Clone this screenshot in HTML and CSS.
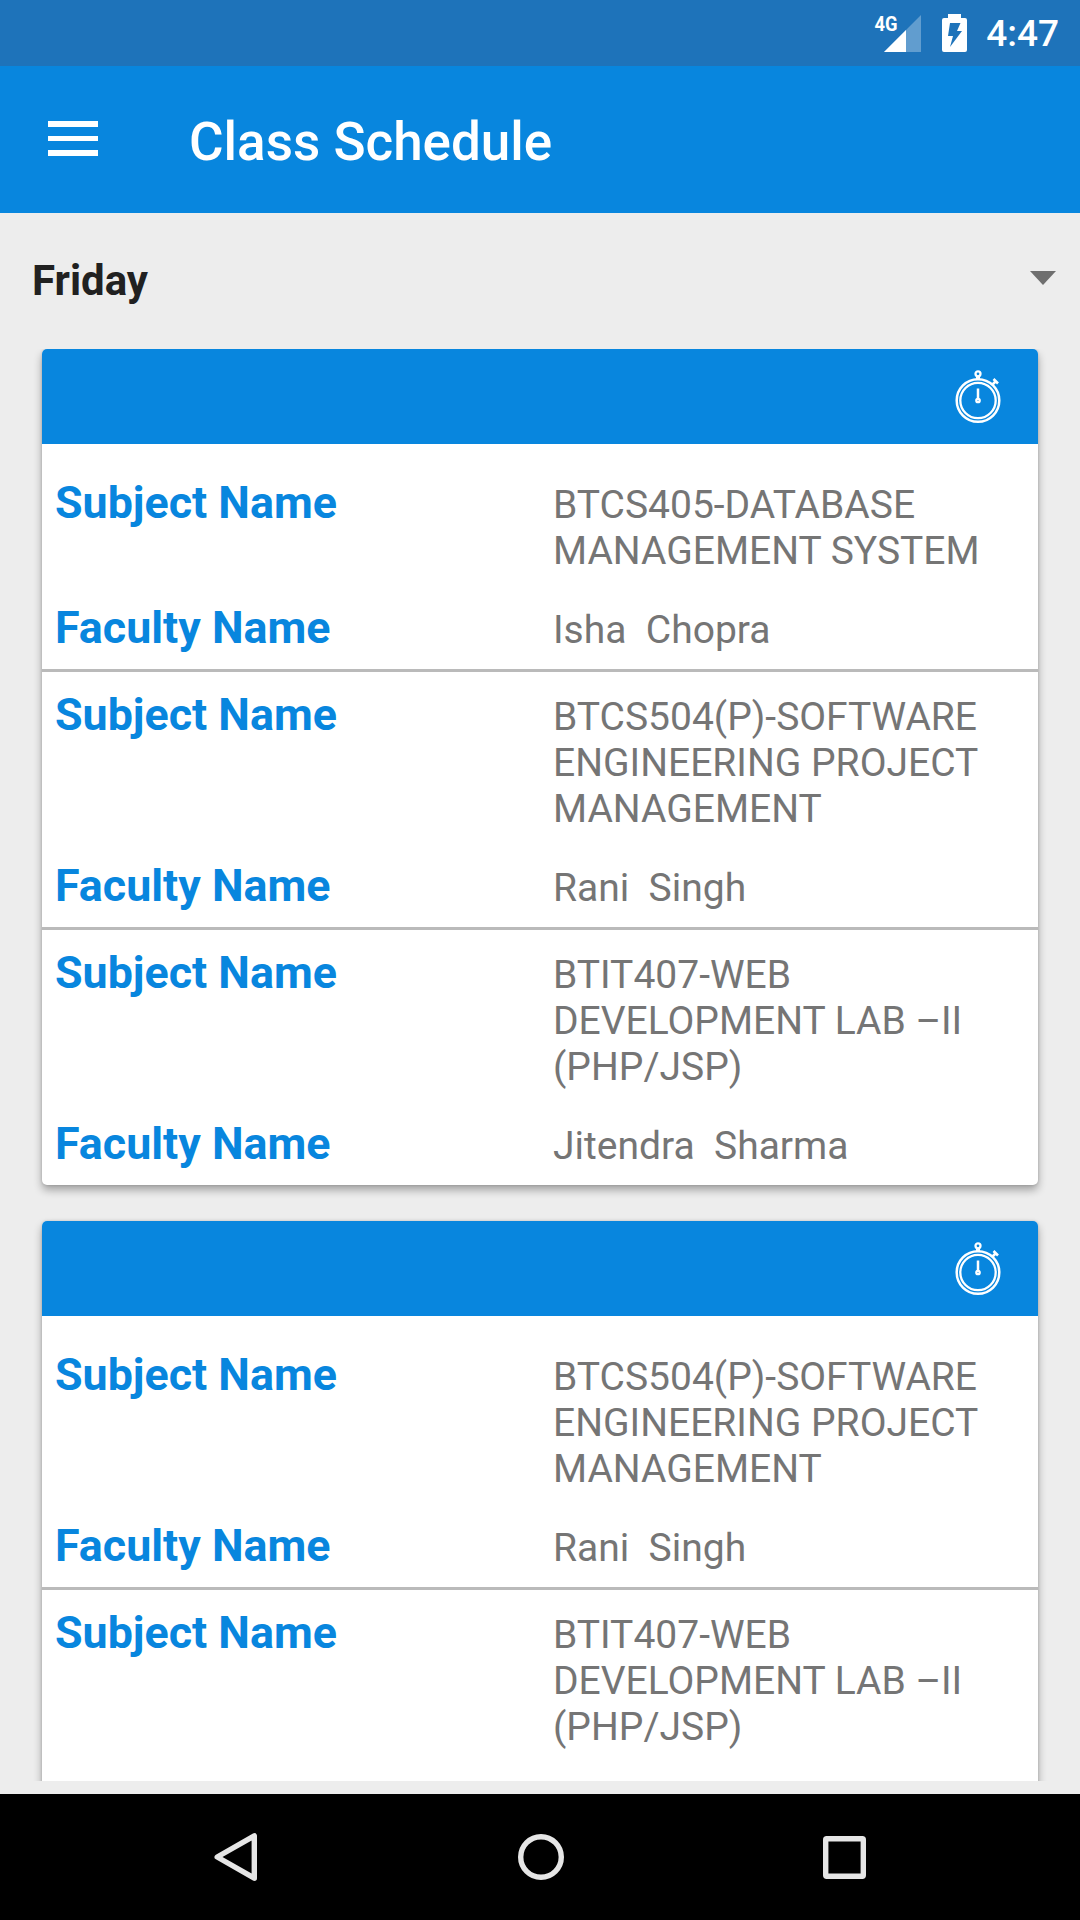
FILE: index.html
```html
<!DOCTYPE html>
<html lang="en">
<head>
    <meta charset="UTF-8">
    <meta name="viewport" content="width=device-width, initial-scale=1.0">
    <title>Class Schedule</title>
    <link rel="stylesheet" href="styles.css">
</head>
<body>
<div class="screen">
    <div class="statusbar">
        <svg class="signal" width="48" height="40" viewBox="0 0 48 40">
            <path d="M47 2V39H10Z" fill="#fff" fill-opacity="0.3"/>
            <path d="M32 17V39H10Z" fill="#fff"/>
            <text class="network" x="0.5" y="18" textLength="23" lengthAdjust="spacingAndGlyphs">4G</text>
        </svg>
        <svg class="battery" width="25" height="38" viewBox="0 0 25 38">
            <path d="M6 0H19V4H23Q25 4 25 6V36Q25 38 23 38H2Q0 38 0 36V6Q0 4 2 4H6Z" fill="#fff"/>
            <path d="M8 9H18.5L15 17H20L8 33L11 22H6Z" fill="#1e73ba"/>
        </svg>
        <span class="time">4:47</span>
    </div>

    <div class="appbar">
        <div class="menu">
            <span></span>
            <span></span>
            <span></span>
        </div>
        <h1>Class Schedule</h1>
    </div>

    <div class="day">
        <span>Friday</span>
        <svg width="26" height="14" viewBox="0 0 26 14"><path d="M0 0H26L13 14Z" fill="#6f6f6f"/></svg>
    </div>

    <div class="list">
        <div class="card">
            <div class="card-head">
                <svg class="watch" width="46" height="54" viewBox="0 0 46 54">
                    <g fill="none" stroke="#fff">
                        <circle cx="23" cy="30.5" r="21.3" stroke-width="2.5"/>
                        <circle cx="23" cy="30.5" r="17.7" stroke-width="2.3"/>
                        <circle cx="23" cy="3.8" r="2.5" stroke-width="2.3"/>
                        <path d="M23 6V9" stroke-width="4"/>
                        <path d="M23 18.5V29" stroke-width="2.5"/>
                        <circle cx="23" cy="30.5" r="1.7" stroke-width="2.3"/>
                        <path d="M37 15L41 11M38.5 9L43 13.5" stroke-width="2.6"/>
                    </g>
                </svg>
            </div>
            <div class="lecture first">
                <div class="field">
                    <div class="label">Subject Name</div>
                    <div class="value">BTCS405-DATABASE MANAGEMENT SYSTEM</div>
                </div>
                <div class="field">
                    <div class="label">Faculty Name</div>
                    <div class="value">Isha  Chopra</div>
                </div>
            </div>
            <div class="lecture">
                <div class="field">
                    <div class="label">Subject Name</div>
                    <div class="value">BTCS504(P)-SOFTWARE ENGINEERING PROJECT MANAGEMENT</div>
                </div>
                <div class="field">
                    <div class="label">Faculty Name</div>
                    <div class="value">Rani  Singh</div>
                </div>
            </div>
            <div class="lecture">
                <div class="field">
                    <div class="label">Subject Name</div>
                    <div class="value">BTIT407-WEB DEVELOPMENT LAB –II (PHP/JSP)</div>
                </div>
                <div class="field">
                    <div class="label">Faculty Name</div>
                    <div class="value">Jitendra  Sharma</div>
                </div>
            </div>
        </div>

        <div class="card">
            <div class="card-head">
                <svg class="watch" width="46" height="54" viewBox="0 0 46 54">
                    <g fill="none" stroke="#fff">
                        <circle cx="23" cy="30.5" r="21.3" stroke-width="2.5"/>
                        <circle cx="23" cy="30.5" r="17.7" stroke-width="2.3"/>
                        <circle cx="23" cy="3.8" r="2.5" stroke-width="2.3"/>
                        <path d="M23 6V9" stroke-width="4"/>
                        <path d="M23 18.5V29" stroke-width="2.5"/>
                        <circle cx="23" cy="30.5" r="1.7" stroke-width="2.3"/>
                        <path d="M37 15L41 11M38.5 9L43 13.5" stroke-width="2.6"/>
                    </g>
                </svg>
            </div>
            <div class="lecture first">
                <div class="field">
                    <div class="label">Subject Name</div>
                    <div class="value">BTCS504(P)-SOFTWARE ENGINEERING PROJECT MANAGEMENT</div>
                </div>
                <div class="field">
                    <div class="label">Faculty Name</div>
                    <div class="value">Rani  Singh</div>
                </div>
            </div>
            <div class="lecture last">
                <div class="field">
                    <div class="label">Subject Name</div>
                    <div class="value">BTIT407-WEB DEVELOPMENT LAB –II (PHP/JSP)</div>
                </div>
            </div>
        </div>
    </div>

    <div class="navbar">
        <svg width="44" height="50" viewBox="0 0 44 50"><path d="M40.3 3.8V46.2L3.2 25Z"/></svg>
        <svg width="46" height="46" viewBox="0 0 46 46"><circle cx="23" cy="23" r="20.3"/></svg>
        <svg width="43" height="43" viewBox="0 0 43 43"><rect x="2.7" y="2.7" width="37.6" height="37.6" rx="1"/></svg>
    </div>
</div>
</body>
</html>
```

FILE: styles.css
```css
body {
    margin: 0;
    font-family: Roboto, sans-serif;
    background-color: #ededed;
}
.screen {
    display: flex;
    flex-direction: column;
    width: 1080px;
    height: 1920px;
    overflow: hidden;
}

/* status bar */
.statusbar {
    display: flex;
    flex: none;
    justify-content: flex-end;
    box-sizing: border-box;
    height: 66px;
    padding-right: 21px;
    background-color: #1e73ba;
    color: white;
}
.signal {
    margin-top: 13px;
    margin-right: 20.5px;
}
.network {
    font-size: 21px;
    font-weight: 700;
    fill: white;
}
.battery {
    margin-top: 14px;
    margin-right: 19px;
}
.time {
    font-size: 37px;
    font-weight: 500;
    line-height: 68px;
}

/* app bar */
.appbar {
    display: flex;
    flex: none;
    align-items: center;
    height: 147px;
    padding-left: 48px;
    background-color: #0886de;
    color: white;
}
.menu {
    display: flex;
    flex-direction: column;
    gap: 8.5px;
    width: 50px;
    margin-bottom: 2px;
}
.menu span {
    height: 5.8px;
    background-color: white;
}
.appbar h1 {
    margin: 4px 0 0 91px;
    font-size: 53px;
    font-weight: 500;
}

/* day selector */
.day {
    display: flex;
    flex: none;
    align-items: center;
    justify-content: space-between;
    box-sizing: border-box;
    height: 136px;
    padding: 0 24px 2px 32px;
    color: #212121;
    font-size: 42px;
    font-weight: 700;
}
.day svg {
    margin-bottom: 5px;
}

/* cards */
.list {
    display: flex;
    flex-direction: column;
    flex: none;
    gap: 36px;
    height: 1432px;
    padding: 0 42px;
    overflow: hidden;
}
.card {
    flex: none;
    border-radius: 5px;
    background-color: white;
    box-shadow: 0 5px 9px rgba(0, 0, 0, 0.32), 0 0 3px rgba(0, 0, 0, 0.15);
}
.card-head {
    display: flex;
    justify-content: flex-end;
    height: 95px;
    border-radius: 5px 5px 0 0;
    background-color: #0886de;
}
.watch {
    margin-top: 20.5px;
    margin-right: 37px;
}
.lecture {
    display: flex;
    flex-direction: column;
    gap: 31px;
    padding: 20px 0 16px;
    border-top: 3px solid #bababa;
}
.first {
    padding-top: 36px;
    border-top: none;
}
.last {
    padding-bottom: 95px;
}
.field {
    display: grid;
    grid-template-columns: 1fr 1fr;
    align-items: baseline;
    line-height: 46px;
}
.label {
    padding-left: 13px;
    color: #0886de;
    font-size: 44.8px;
    font-weight: 700;
}
.value {
    padding: 0 13px;
    color: #757575;
    font-size: 39px;
    white-space: pre-wrap;
}

/* navigation bar */
.navbar {
    display: flex;
    flex: none;
    align-items: center;
    justify-content: space-between;
    box-sizing: border-box;
    height: 126px;
    margin-top: 13px;
    padding: 0 214px;
    background-color: black;
}
.navbar svg {
    fill: none;
    stroke: #e6e6e6;
    stroke-width: 5.4px;
    stroke-linejoin: round;
}
```
